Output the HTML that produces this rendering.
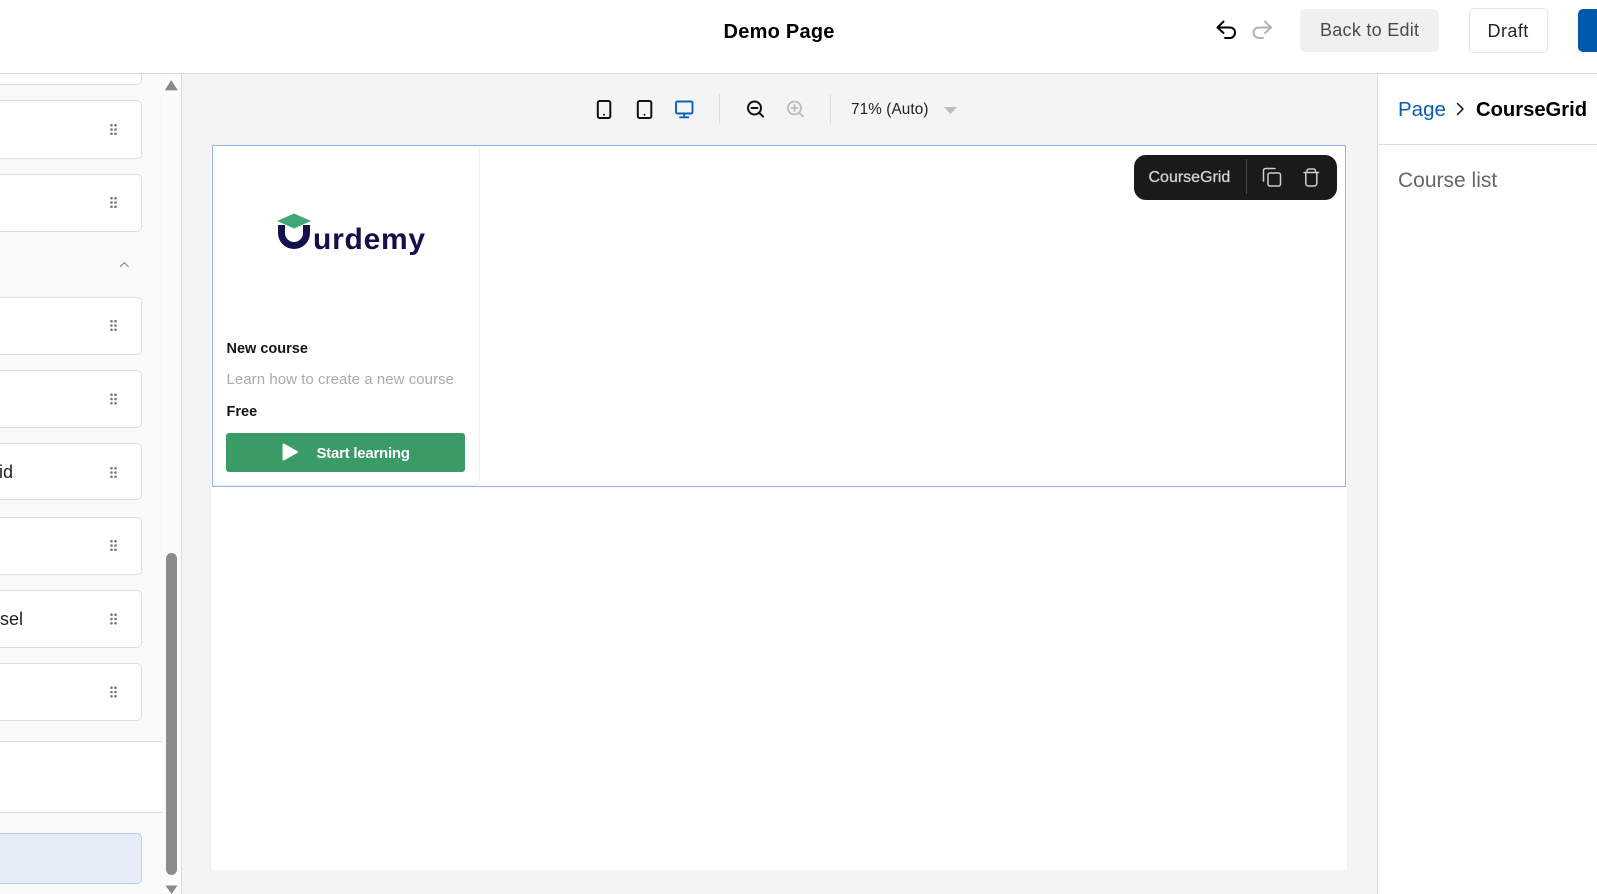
<!DOCTYPE html>
<html lang="en"><head><meta charset="utf-8"><title>Demo Page</title>
<style>
*{box-sizing:border-box}
html,body{margin:0;padding:0;width:1597px;height:894px;overflow:hidden;background:#fff;font-family:"Liberation Sans",sans-serif}
.a{position:absolute}
.t{position:absolute;white-space:nowrap;line-height:1}
.card{position:absolute;left:-10px;width:152px;background:#fff;border:1px solid #dedede;border-radius:5px}
.btn{position:absolute;border-radius:5px}
svg{position:absolute;overflow:visible}
</style></head><body>
<!-- header -->
<div class="a" style="left:0;top:0;width:1597px;height:74px;background:#fff;border-bottom:1px solid #d9d9d9"></div>
<div class="t" style="left:723.500px;top:21.500px;font-size:20px;font-weight:700;color:#000;letter-spacing:.25px">Demo Page</div>
<svg style="left:1214px;top:18px" width="24" height="24" viewBox="0 0 24 24" fill="none" stroke="#000" stroke-width="2" stroke-linecap="round" stroke-linejoin="round"><path d="M9.500 3.500 3.500 9.500l6 5.500"/><path d="M3.500 9.500H16c3 0 5 2.200 5 5s-2 5.500-5 5.500h-5"/></svg>
<svg style="left:1250px;top:18px" width="24" height="24" viewBox="0 0 24 24" fill="none" stroke="#b3b3b3" stroke-width="2" stroke-linecap="round" stroke-linejoin="round"><path d="M15 3.500l6 6-6 5.500"/><path d="M21 9.500H9c-3.200 0-5.500 2.200-5.500 5s2.300 5.500 5.500 5.500h4"/></svg>
<div class="btn" style="left:1300px;top:9px;width:139px;height:43px;background:#f0f0f0"></div>
<div class="t" style="left:1320px;top:21px;font-size:18px;color:#444a55;letter-spacing:.27px">Back to Edit</div>
<div class="btn" style="left:1469px;top:8px;width:79px;height:45px;background:#fff;border:1px solid #e3e3e3"></div>
<div class="t" style="left:1487.500px;top:22px;font-size:18px;color:#1f2530;letter-spacing:.45px">Draft</div>
<div class="btn" style="left:1578px;top:9px;width:40px;height:43px;background:#0058ad"></div>

<!-- left sidebar -->
<div class="a" style="left:0;top:74px;width:182px;height:820px;background:#f9f9f9;border-right:1px solid #dcdcdc"></div>
<div class="a" style="left:162px;top:74px;width:19px;height:820px;background:#fbfbfb"></div>
<div class="card" style="top:40px;height:45px"></div>
<div class="card" style="top:100px;height:58.500px"></div>
<div class="card" style="top:174px;height:57.500px"></div>
<div class="card" style="top:297px;height:57.500px"></div>
<div class="card" style="top:370px;height:57.500px"></div>
<div class="card" style="top:443px;height:57px"></div>
<div class="card" style="top:517px;height:57.500px"></div>
<div class="card" style="top:590px;height:57.500px"></div>
<div class="card" style="top:663px;height:58px"></div>
<div class="a" style="left:0;top:0;width:162px;height:74px;background:#fff;border-bottom:1px solid #d9d9d9"></div>
<div class="t" style="left:-1px;top:463px;font-size:18px;color:#222">id</div>
<div class="t" style="left:0;top:610px;font-size:18px;color:#222">sel</div>
<svg width="0" height="0"><defs><g id="dr" fill="#777"><circle cx="-2" cy="-4.300" r="1.300"/><circle cx="2" cy="-4.300" r="1.300"/><circle cx="-2" cy="0" r="1.300"/><circle cx="2" cy="0" r="1.300"/><circle cx="-2" cy="4.300" r="1.300"/><circle cx="2" cy="4.300" r="1.300"/></g></defs></svg>
<svg style="left:0;top:0" width="182" height="894">
<use href="#dr" x="113.500" y="129.500"/><use href="#dr" x="113.500" y="202.500"/><use href="#dr" x="113.500" y="325.500"/><use href="#dr" x="113.500" y="399"/><use href="#dr" x="113.500" y="472.500"/><use href="#dr" x="113.500" y="545.500"/><use href="#dr" x="113.500" y="619"/><use href="#dr" x="113.500" y="692"/>
<path d="M120 267l4.300-4.300 4.300 4.300" fill="none" stroke="#888" stroke-width="1.100"/>
<path d="M171.200 80 177.300 89.500a.6.6 0 0 1-.5.9H165.800a.6.6 0 0 1-.5-.9Z" fill="#8a8a8a"/>
<path d="M165.500 885.500H177.500L171.500 894Z" fill="#8a8a8a"/>
</svg>
<div class="a" style="left:166px;top:553px;width:11px;height:322px;background:#8c8c8c;border-radius:5.500px"></div>
<div class="a" style="left:0;top:741px;width:162px;height:72px;background:#fff;border-top:1px solid #dedede;border-bottom:1px solid #dedede"></div>
<div class="a" style="left:-10px;top:833px;width:152px;height:51px;background:#e6edf7;border:1px solid #b5cde8;border-radius:5px"></div>

<!-- canvas -->
<div class="a" style="left:182px;top:74px;width:1195px;height:820px;background:#f4f4f4"></div>
<div class="a" style="left:211px;top:145px;width:1136px;height:725px;background:#fff;box-shadow:0 0 0 1px #f0f0f0"></div>
<div class="a" style="left:212px;top:145px;width:1134px;height:342px;border:1px solid #8fb6e6"></div>
<div class="a" style="left:213px;top:146px;width:267px;height:340px;border-right:1px solid #eeeeee;border-bottom:1px solid #eeeeee;border-bottom-right-radius:6px"></div>

<!-- toolbar -->
<svg style="left:590px;top:95px" width="380" height="32" fill="none" stroke-linecap="round" stroke-linejoin="round">
<rect x="7.800" y="6" width="12.500" height="17" rx="1.800" stroke="#111" stroke-width="2"/><circle cx="14" cy="19.800" r="1" fill="#111"/>
<rect x="47.800" y="6" width="13.500" height="17" rx="1.800" stroke="#111" stroke-width="2"/><circle cx="54.500" cy="19.800" r="1" fill="#111"/>
<rect x="86" y="6.500" width="16.500" height="12" rx="1.500" stroke="#0b5fb4" stroke-width="1.900"/><path d="M94.200 18.500v3.500M90 22.300h8.400" stroke="#0b5fb4" stroke-width="1.900"/>
<circle cx="164.500" cy="13" r="6.500" stroke="#111" stroke-width="2"/><path d="M161.500 13h6M169.500 18l3.500 3.500" stroke="#111" stroke-width="2"/>
<circle cx="204.500" cy="13" r="6.500" stroke="#bbb" stroke-width="1.800"/><path d="M201.500 13h6M204.500 10v6M209.500 18l3.500 3.500" stroke="#bbb" stroke-width="1.800"/>
</svg>
<div class="a" style="left:719px;top:94px;width:1px;height:30px;background:#dcdcdc"></div>
<div class="a" style="left:830px;top:94px;width:1px;height:30px;background:#dcdcdc"></div>
<div class="t" style="left:851px;top:101.500px;font-size:15.300px;color:#222;letter-spacing:.1px">71% (Auto)</div>
<svg style="left:944px;top:107px" width="14" height="8"><path d="M0 0H13L6.500 7Z" fill="#bdbdbd"/></svg>

<!-- course card -->
<div class="a" style="left:270px;top:205px;width:170px;height:60px">
<svg style="left:0;top:0" width="170" height="60">
<path d="M11.500 20v8a12.500 12.500 0 0 0 25 0v-8" fill="none" stroke="#13104a" stroke-width="7"/>
<path d="M24 8.500 41 16 24 23.500 7 16Z" fill="#3fa876"/>
<text x="43" y="44" font-family="'Liberation Sans',sans-serif" font-size="30" font-weight="700" fill="#13104a" letter-spacing=".75">urdemy</text>
</svg>
</div>
<div class="t" style="left:226.500px;top:342px;font-size:14.500px;font-weight:700;color:#151515">New course</div>
<div class="t" style="left:226.500px;top:372px;font-size:15px;color:#a9a9b3;letter-spacing:.05px">Learn how to create a new course</div>
<div class="t" style="left:226.500px;top:405px;font-size:14.500px;font-weight:700;color:#151515">Free</div>
<div class="a" style="left:226px;top:433px;width:239px;height:39px;background:#3a9b67;border-radius:3px"></div>
<svg style="left:281px;top:442px" width="18" height="20"><path d="M2.500 2.500 16 10 2.500 17.500Z" fill="#fff" stroke="#fff" stroke-width="2" stroke-linejoin="round"/></svg>
<div class="t" style="left:316.500px;top:446px;font-size:15px;font-weight:700;color:#fff;letter-spacing:-.25px">Start learning</div>

<!-- floating toolbar -->
<div class="a" style="left:1133.500px;top:154.500px;width:203px;height:45px;background:#1a1a1a;border-radius:12px"></div>
<div class="t" style="left:1148.500px;top:170px;font-size:16px;color:#d2d2d2;-webkit-text-stroke:.3px #d2d2d2">CourseGrid</div>
<div class="a" style="left:1245.500px;top:159px;width:1px;height:35px;background:#4a4a4a"></div>
<svg style="left:1260px;top:165px" width="64" height="24" fill="none" stroke="#cfcfcf" stroke-width="1.500" stroke-linecap="round" stroke-linejoin="round">
<rect x="8" y="8" width="12.500" height="13" rx="2"/><path d="M3.500 16V5.500a2 2 0 0 1 2-2H15"/>
<path d="M44 7.500H58.500M47 7.500v-1.500a2 2 0 0 1 2-2h4.500a2 2 0 0 1 2 2v1.500M45.800 7.500V18.500a2.500 2.500 0 0 0 2.500 2.500h6a2.500 2.500 0 0 0 2.500-2.500V7.500"/>
</svg>

<!-- right panel -->
<div class="a" style="left:1377px;top:74px;width:220px;height:820px;background:#fff;border-left:1px solid #dcdcdc"></div>
<div class="a" style="left:1377px;top:144px;width:220px;height:1px;background:#dedede"></div>
<div class="t" style="left:1398px;top:99.500px;font-size:20.500px;color:#0b5cad">Page</div>
<svg style="left:1455px;top:101.500px" width="12" height="14"><path d="M2.500 1.500 8 7l-5.500 5.500" fill="none" stroke="#111" stroke-width="1.500" stroke-linecap="round" stroke-linejoin="round"/></svg>
<div class="t" style="left:1476px;top:99.500px;font-size:20.200px;font-weight:700;color:#000">CourseGrid</div>
<div class="t" style="left:1398px;top:170px;font-size:21px;color:#666">Course list</div>
</body></html>
